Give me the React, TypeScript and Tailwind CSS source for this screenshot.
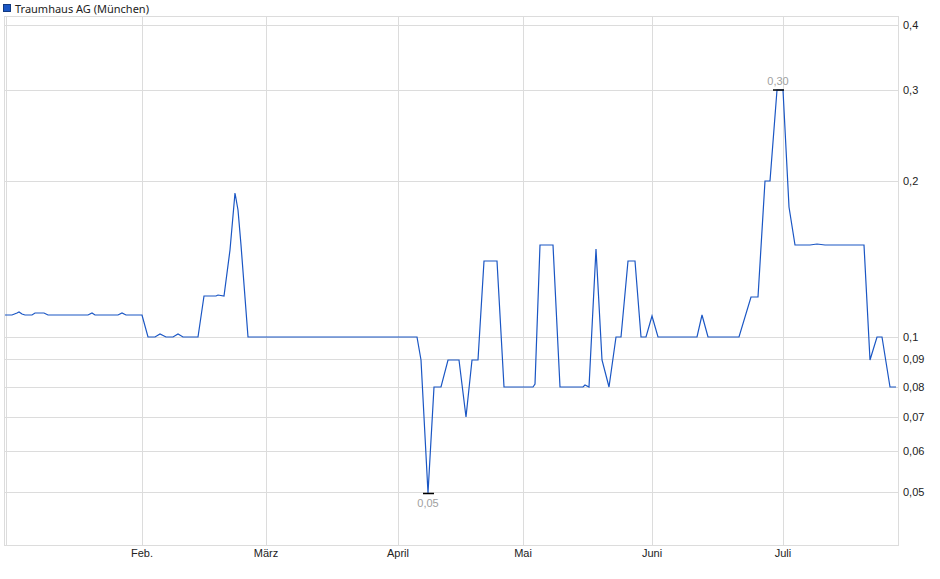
import React from 'react'

const pts: [number, number][] = [
  [5, 315], [12, 315], [17, 313], [19, 312], [22, 314], [25, 315], [32, 315], [35, 313], [44, 313], [48, 315],
  [88, 315], [92, 313], [95, 315], [118, 315], [122, 313], [126, 315], [142, 315], [148, 337], [155, 337],
  [160, 334], [166, 337], [173, 337], [178, 334], [183, 337], [198, 337], [204, 296], [216, 296], [218, 295],
  [224, 296], [230, 250], [235, 193], [238, 210], [241, 245], [248, 337], [417, 337], [421, 360], [428, 493],
  [434, 387], [441, 387], [448, 360], [459, 360], [466, 417], [472, 360], [478, 360], [484, 261], [497, 261],
  [504, 387], [533, 387], [535, 384], [540, 245], [553, 245], [560, 387], [583, 387], [585, 385], [589, 387],
  [596, 249], [602, 360], [609, 387], [616, 337], [621, 337], [628, 261], [635, 261], [641, 337], [646, 337],
  [652, 316], [658, 337], [697, 337], [702, 315], [708, 337], [739, 337], [751, 297], [758, 297], [765, 181],
  [770, 181], [777, 90], [783, 90], [789, 207], [795, 245], [810, 245], [817, 244], [825, 245], [864, 245],
  [870, 360], [877, 337], [882, 337], [890, 387], [896, 387],
]

const yTicks = [
  { v: '0,4', y: 25 }, { v: '0,3', y: 90 }, { v: '0,2', y: 181 }, { v: '0,1', y: 337 }, { v: '0,09', y: 359 },
  { v: '0,08', y: 387 }, { v: '0,07', y: 417 }, { v: '0,06', y: 451 }, { v: '0,05', y: 492 },
]

const months = [
  { m: 'Feb.', x: 142 }, { m: 'März', x: 266 }, { m: 'April', x: 398 }, { m: 'Mai', x: 523 },
  { m: 'Juni', x: 652 }, { m: 'Juli', x: 783 },
]

const FONT = '"Liberation Sans", Arial, sans-serif'

export default function App() {
  return (
    <div className="w-[940px] h-[579px] bg-white flex flex-col font-['Liberation_Sans'] text-[#222]">
      {/* Legend */}
      <div className="h-4 flex items-center gap-1 px-[3px] text-[11px] leading-none">
        <span className="w-[8px] h-[8px] bg-[#1a56c4] border border-[#123a80]" />
        <span>Traumhaus AG (München)</span>
      </div>

      {/* Chart */}
      <svg width="940" height="563" viewBox="0 16 940 563" className="block" fontFamily={FONT}>
        {yTicks.map(t => (
          <line key={t.y} x1="4" x2="898" y1={t.y + 0.5} y2={t.y + 0.5} stroke="#dcdcdc" />
        ))}
        {months.map(mo => (
          <line key={mo.x} x1={mo.x + 0.5} x2={mo.x + 0.5} y1="16" y2="545" stroke="#dcdcdc" />
        ))}
        <rect x="4.5" y="16.5" width="894" height="529" fill="none" stroke="#dcdcdc" />
        <line x1="6.5" x2="6.5" y1="16" y2="545" stroke="#dcdcdc" />

        <polyline
          points={pts.map(p => `${p[0]},${p[1]}`).join(' ')}
          fill="none"
          stroke="#1a56c4"
          strokeWidth="1.2"
        />

        <line x1="423" x2="434" y1="493.5" y2="493.5" stroke="#000" strokeWidth="1.5" />
        <line x1="773" x2="784" y1="90" y2="90" stroke="#000" strokeWidth="1.5" />
        <text x="428" y="507" fontSize="11" fill="#a0a0a0" textAnchor="middle">0,05</text>
        <text x="778" y="85" fontSize="11" fill="#a0a0a0" textAnchor="middle">0,30</text>

        {yTicks.map(t => (
          <text key={t.v} x="903" y={t.y + 4} fontSize="11" fill="#222">{t.v}</text>
        ))}
        {months.map(mo => (
          <text key={mo.m} x={mo.x} y="557" fontSize="11" fill="#222" textAnchor="middle">{mo.m}</text>
        ))}
      </svg>
    </div>
  )
}
